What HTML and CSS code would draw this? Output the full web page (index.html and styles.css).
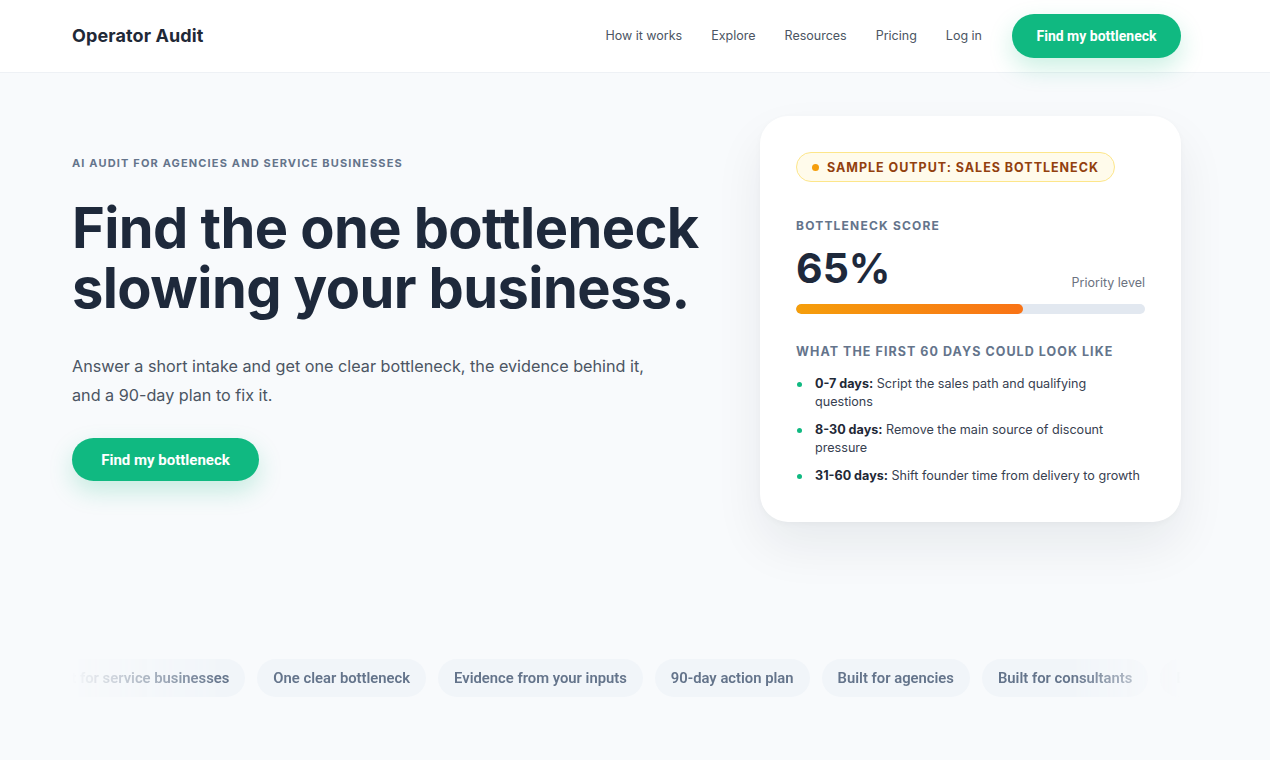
FILE: index.html
```html
<!DOCTYPE html>
<html lang="en">
<head>
<meta charset="utf-8">
<title>Operator Audit</title>
<link rel="stylesheet" href="styles.css">
</head>
<body>
<header class="site-header">
  <div class="container header-inner">
    <a class="logo" href="#">Operator Audit</a>
    <nav class="nav">
      <a href="#">How it works</a>
      <a href="#">Explore</a>
      <a href="#">Resources</a>
      <a href="#">Pricing</a>
      <a href="#">Log in</a>
      <a class="btn btn-nav" href="#">Find my bottleneck</a>
    </nav>
  </div>
</header>

<main>
  <section class="container hero">
    <div class="hero-copy">
      <p class="eyebrow">AI AUDIT FOR AGENCIES AND SERVICE BUSINESSES</p>
      <h1 class="headline">Find the one bottleneck slowing your business.</h1>
      <p class="lead">Answer a short intake and get one clear bottleneck, the evidence behind it, and a 90-day plan to fix it.</p>
      <a class="btn btn-hero" href="#">Find my bottleneck</a>
    </div>

    <aside class="card">
      <span class="badge"><span class="badge-dot"></span>SAMPLE OUTPUT: SALES BOTTLENECK</span>
      <p class="card-label">BOTTLENECK SCORE</p>
      <div class="score-row">
        <span class="score">65%</span>
        <span class="priority">Priority level</span>
      </div>
      <div class="bar"><div class="bar-fill" style="width:65%"></div></div>
      <p class="card-label plan-label">WHAT THE FIRST 60 DAYS COULD LOOK LIKE</p>
      <ul class="plan">
        <li><strong>0-7 days:</strong> Script the sales path and qualifying questions</li>
        <li><strong>8-30 days:</strong> Remove the main source of discount pressure</li>
        <li><strong>31-60 days:</strong> Shift founder time from delivery to growth</li>
      </ul>
    </aside>
  </section>

  <section class="container marquee">
    <div class="marquee-viewport">
      <div class="marquee-track">
        <span class="pill">Built for service businesses</span>
        <span class="pill">One clear bottleneck</span>
        <span class="pill">Evidence from your inputs</span>
        <span class="pill">90-day action plan</span>
        <span class="pill">Built for agencies</span>
        <span class="pill">Built for consultants</span>
        <span class="pill">Built for service businesses</span>
      </div>
    </div>
  </section>
</main>
</body>
</html>
```

FILE: styles.css
```css
* { box-sizing: border-box; }

html, body {
  margin: 0;
  padding: 0;
}

body {
  background: #f8fafc;
  font-family: Inter, "Noto Sans", "Liberation Sans", sans-serif;
  color: #1e293b;
  min-height: 760px;
}

a { text-decoration: none; color: inherit; }

.container {
  padding: 0 89px 0 72px;
}

/* Header */
.site-header {
  background: #ffffff;
  border-bottom: 1px solid #eef1f5;
  height: 73px;
}

.header-inner {
  height: 71px;
  display: flex;
  align-items: center;
  justify-content: space-between;
}

.logo {
  font-size: 18px;
  font-weight: 700;
  color: #1f2937;
  letter-spacing: 0.1px;
}

.nav {
  display: flex;
  align-items: center;
  gap: 29px;
  font-size: 12.5px;
  color: #4b5563;
}

.btn {
  display: inline-flex;
  align-items: center;
  justify-content: center;
  background: #10b981;
  color: #ffffff;
  font-family: Roboto, "Liberation Sans", sans-serif;
  font-weight: 700;
  border-radius: 999px;
  box-shadow: 0 10px 24px rgba(16, 185, 129, 0.22);
}

.btn-nav {
  width: 169px;
  height: 44px;
  font-size: 14px;
  margin-left: 1px;
}

/* Hero */
.hero {
  display: flex;
  justify-content: space-between;
  align-items: flex-start;
  padding-top: 43px;
}

.hero-copy {
  padding-top: 40px;
  width: 660px;
}

.eyebrow {
  margin: 0;
  font-size: 11px;
  font-weight: 700;
  letter-spacing: 1.15px;
  color: #64748b;
}

.headline {
  margin: 28px 0 0;
  font-size: 56px;
  line-height: 60px;
  font-weight: 700;
  letter-spacing: -0.6px;
  color: #1e293b;
  width: 660px;
}

.lead {
  margin: 34px 0 0;
  font-size: 16.2px;
  line-height: 29px;
  color: #4b5563;
  width: 590px;
}

.btn-hero {
  margin-top: 28px;
  width: 187px;
  height: 43px;
  font-size: 15px;
}

/* Card */
.card {
  width: 421px;
  background: #ffffff;
  border-radius: 28px;
  padding: 36px 36px 37px;
  box-shadow: 0 24px 50px rgba(15, 23, 42, 0.07), 0 2px 6px rgba(15, 23, 42, 0.03);
}

.badge {
  display: inline-flex;
  align-items: center;
  height: 30px;
  padding: 0 15px;
  border-radius: 999px;
  background: #fffbeb;
  border: 1px solid #fde68a;
  color: #92400e;
  font-size: 12.5px;
  font-weight: 700;
  letter-spacing: 0.98px;
}

.badge-dot {
  width: 7px;
  height: 7px;
  border-radius: 50%;
  background: #f59e0b;
  margin-right: 8px;
}

.card-label {
  margin: 36px 0 0;
  font-size: 12px;
  font-weight: 700;
  letter-spacing: 1.2px;
  color: #64748b;
}

.score-row {
  display: flex;
  justify-content: space-between;
  align-items: flex-end;
  margin-top: 10px;
}

.score {
  font-size: 41px;
  line-height: 50px;
  font-weight: 700;
  color: #1e293b;
  letter-spacing: 0px;
}

.priority {
  font-size: 12.5px;
  color: #6b7280;
  padding-bottom: 3px;
}

.bar {
  margin-top: 11px;
  height: 10px;
  background: #e2e8f0;
  border-radius: 999px;
  overflow: hidden;
}

.bar-fill {
  height: 100%;
  border-radius: 999px;
  background: linear-gradient(90deg, #f59e0b, #f97316);
}

.plan-label {
  margin-top: 30px;
  font-size: 12.5px;
  letter-spacing: 1.05px;
}

.plan {
  list-style: none;
  margin: 16px 0 0;
  padding: 0;
  font-size: 12.6px;
  line-height: 18px;
  color: #374151;
}

.plan li {
  position: relative;
  padding-left: 19px;
  margin-bottom: 10px;
}

.plan li:last-child { margin-bottom: 0; }

.plan li::before {
  content: "";
  position: absolute;
  left: 1px;
  top: 7px;
  width: 5px;
  height: 5px;
  border-radius: 50%;
  background: #10b981;
}

.plan strong {
  font-weight: 700;
  color: #1f2937;
}

/* Marquee */
.marquee {
  margin-top: 137px;
}

.marquee-viewport {
  overflow: hidden;
  -webkit-mask-image: linear-gradient(90deg, transparent 0, #000 150px, #000 1000px, transparent 1109px);
  mask-image: linear-gradient(90deg, transparent 0, #000 150px, #000 1000px, transparent 1109px);
}

.marquee-track {
  display: flex;
  gap: 12px;
  transform: translateX(-42px);
}

.pill {
  flex: none;
  height: 38px;
  display: inline-flex;
  align-items: center;
  padding: 0 16px;
  border-radius: 999px;
  background: #f1f5f9;
  color: #64748b;
  font-family: Roboto, "Liberation Sans", sans-serif;
  font-weight: 600;
  font-size: 14.8px;
}
```
